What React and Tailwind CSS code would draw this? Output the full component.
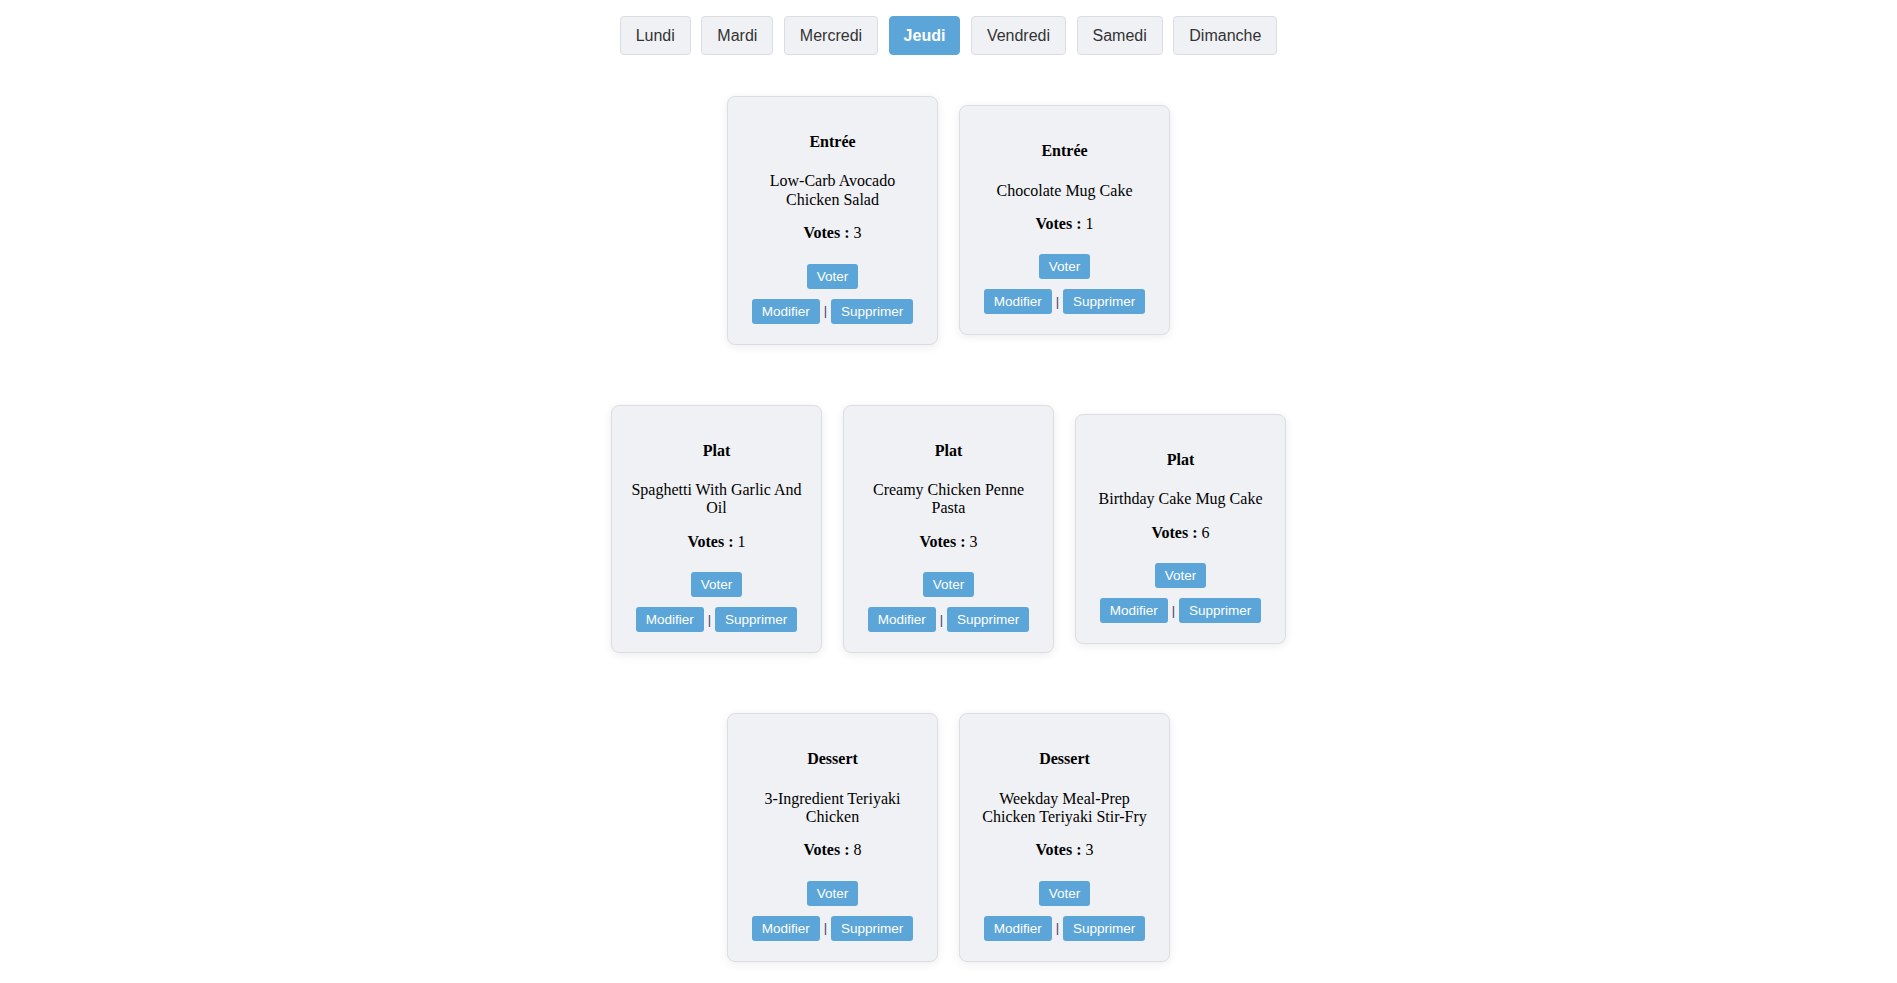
import React from "react";

const days = ["Lundi", "Mardi", "Mercredi", "Jeudi", "Vendredi", "Samedi", "Dimanche"];

const rows = [
  [
    { cat: "Entrée", name: "Low-Carb Avocado Chicken Salad", votes: 3 },
    { cat: "Entrée", name: "Chocolate Mug Cake", votes: 1 },
  ],
  [
    { cat: "Plat", name: "Spaghetti With Garlic And Oil", votes: 1 },
    { cat: "Plat", name: "Creamy Chicken Penne Pasta", votes: 3 },
    { cat: "Plat", name: "Birthday Cake Mug Cake", votes: 6 },
  ],
  [
    { cat: "Dessert", name: "3-Ingredient Teriyaki Chicken", votes: 8 },
    { cat: "Dessert", name: "Weekday Meal-Prep Chicken Teriyaki Stir-Fry", votes: 3 },
  ],
];

function Btn({ children }) {
  return (
    <button
      className="h-[25px] px-[10px] rounded-[3px] bg-[#5ba5d8] text-white text-[13.5px] leading-[25px] font-['Liberation_Sans',Arial,sans-serif]"
      type="button"
    >
      {children}
    </button>
  );
}

function Card({ cat, name, votes }) {
  return (
    <div className="w-[211px] border border-[#dcdde2] rounded-[8px] bg-[#f0f1f5] px-[14px] pt-[15px] pb-[15px] text-center shadow-[0_2px_10px_rgba(0,0,0,0.08)] font-['Liberation_Serif','Times_New_Roman',serif] text-black text-[16px]">
      <h4 className="mt-[21px] font-bold leading-[18.4px]">{cat}</h4>
      <p className="mt-[21px] leading-[18.4px]">{name}</p>
      <p className="mt-[15px] leading-[18.4px]">
        <span className="font-bold">Votes :</span> {votes}
      </p>
      <div className="mt-[21px] flex justify-center">
        <Btn>Voter</Btn>
      </div>
      <div className="mt-[10px] mb-[5px] flex justify-center items-center">
        <Btn>Modifier</Btn>
        <span className="mx-[4px] text-[13px] leading-[16px] text-[#3c3f6e] font-['Liberation_Sans',Arial,sans-serif]">|</span>
        <Btn>Supprimer</Btn>
      </div>
    </div>
  );
}

export default function App() {
  return (
    <div className="min-h-[983px] bg-white">
      <div className="h-0 shadow-[0_0_10px_rgba(0,0,0,0.18)]" />
      <div className="mt-4 flex justify-center gap-[10.5px]">
        {days.map((d) => {
          const active = d === "Jeudi";
          return (
            <button
              key={d}
              type="button"
              className={
                active
                  ? "h-[39px] px-[14px] rounded-[4px] border border-[#5ba5d8] bg-[#5ba5d8] text-white font-bold text-[16px] font-['Liberation_Sans',Arial,sans-serif]"
                  : "h-[39px] px-[15px] rounded-[4px] border border-[#dcdde2] bg-[#f0f1f5] text-[#333333] text-[16px] font-['Liberation_Sans',Arial,sans-serif]"
              }
            >
              {d}
            </button>
          );
        })}
      </div>
      <div className="mt-[41px] flex flex-col gap-[60px]">
        {rows.map((row, i) => (
          <div key={i} className="flex justify-center items-center gap-[21px]">
            {row.map((c, j) => (
              <Card key={j} {...c} />
            ))}
          </div>
        ))}
      </div>
    </div>
  );
}
